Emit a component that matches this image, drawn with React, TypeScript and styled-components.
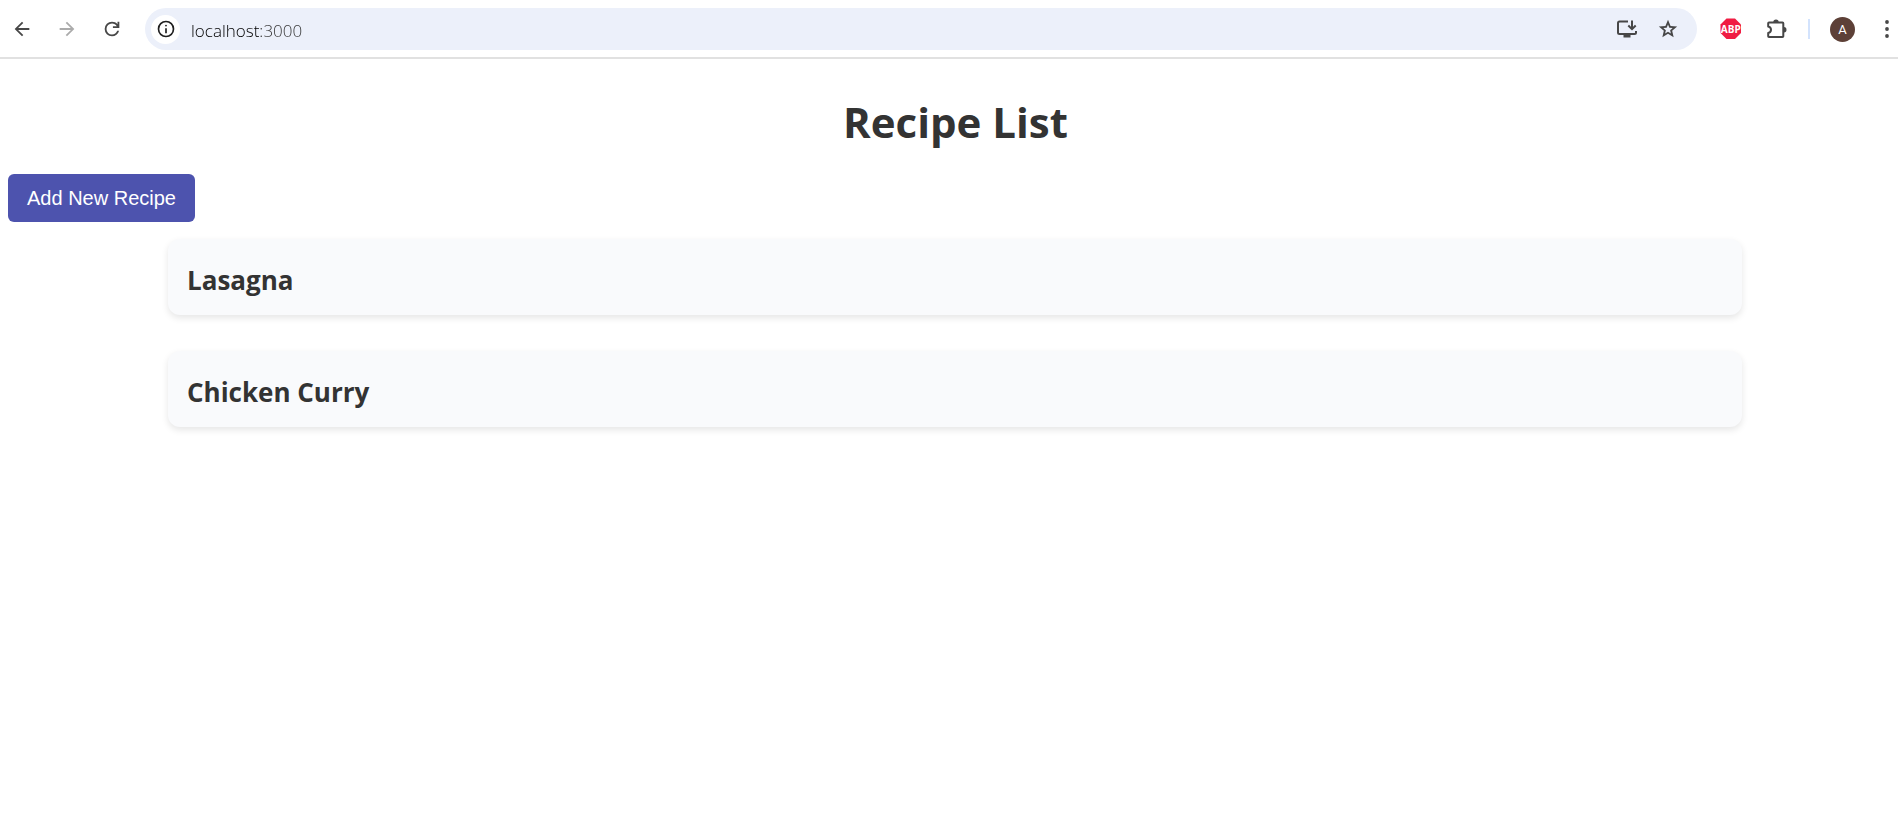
import React, { useState } from "react";
import styled, { createGlobalStyle } from "styled-components";

const GlobalStyle = createGlobalStyle`
  *, *::before, *::after { box-sizing: border-box; }
  body {
    margin: 0;
    background: #fff;
    color: #333;
    font-family: "Segoe UI", "Open Sans", "Noto Sans", sans-serif;
  }
`;

const Toolbar = styled.header`
  display: flex;
  align-items: center;
  height: 59px;
  padding: 8px 7px 7px;
  border-bottom: 2px solid #e1e1e1;
`;

const NavGroup = styled.nav`
  display: flex;
  gap: 16px;
  margin-right: 19px;
`;

const IconButton = styled.button<{ $color?: string; $width?: number }>`
  display: flex;
  align-items: center;
  justify-content: center;
  width: ${(p) => p.$width ?? 29}px;
  height: 29px;
  padding: 0;
  border: 0;
  border-radius: 50%;
  background: none;
  color: ${(p) => p.$color ?? "#474747"};
  flex: none;
  cursor: pointer;

  svg { display: block; flex: none; }
`;

const AddressBar = styled.div`
  display: flex;
  align-items: center;
  flex: 1;
  min-width: 0;
  height: 42px;
  padding: 0 15px 0 6px;
  border-radius: 21px;
  background: #ecf0fa;
`;

const SiteInfo = styled(IconButton)`
  background: #fff;
  color: #1f1f1f;
`;

const AddressInput = styled.input`
  flex: 1;
  min-width: 0;
  height: 32px;
  margin: 0 11px;
  padding: 2px 0 0;
  border: 0;
  outline: 0;
  background: linear-gradient(90deg, #000 70px, #333 70px);
  background-clip: text;
  color: transparent;
  caret-color: #1f1f1f;
  font: 300 17px/30px "Segoe UI", "Open Sans", "Noto Sans", sans-serif;
`;

const AddressActions = styled.div`
  display: flex;
  gap: 12px;
`;

const Extensions = styled.div`
  display: flex;
  gap: 17px;
  margin-left: 19px;
`;

const Divider = styled.span`
  width: 2px;
  height: 20px;
  margin: 0 20px 0 17px;
  background: #d3e3fd;
`;

const Avatar = styled.button`
  width: 25px;
  height: 25px;
  margin-right: 28px;
  padding: 0;
  border: 0;
  border-radius: 50%;
  background: #5d4037;
  color: #fff;
  font: 400 13px/25px Roboto, sans-serif;
  text-align: center;
  flex: none;
`;

const Page = styled.main`
  padding: 31px 0 32px 8px;
`;

const Title = styled.h1`
  margin: 0 0 21px;
  padding-left: 5px;
  font-size: 42px;
  line-height: 63px;
  font-weight: 700;
  text-align: center;
`;

const AddButton = styled.button`
  display: block;
  height: 48px;
  padding: 0 19px;
  border: 0;
  border-radius: 6px;
  background: #4d53ae;
  color: #fff;
  font: 400 20px/24px "Liberation Sans", Arial, sans-serif;
  cursor: pointer;
`;

const RecipeList = styled.ul`
  display: flex;
  flex-direction: column;
  gap: 36px;
  margin: 17px 156px 0 160px;
  padding: 0;
  list-style: none;

  @media (max-width: 800px) {
    margin-left: 16px;
    margin-right: 16px;
  }
`;

const RecipeCard = styled.li`
  padding: 22px 19px 16px;
  border-radius: 12px;
  background: #f9fafc;
  box-shadow: 0 3px 7px rgba(0, 0, 0, 0.1);
`;

const RecipeName = styled.h2`
  margin: 0;
  font-size: 26px;
  line-height: 38px;
  font-weight: 700;
`;

const recipes = ["Lasagna", "Chicken Curry"];

const Icon = ({ d, size = 22 }: { d: string; size?: number }) => (
  <svg width={size} height={size} viewBox="0 0 24 24" fill="currentColor" aria-hidden="true">
    <path d={d} />
  </svg>
);

const BACK = "M7.8 13l5.6 5.6L12 20l-8-8 8-8 1.4 1.4L7.8 11H20v2z";
const FORWARD = "M16.2 13H4v-2h12.2l-5.6-5.6L12 4l8 8-8 8-1.4-1.4z";
const RELOAD =
  "M12 20q-3.35 0-5.675-2.325T4 12q0-3.35 2.325-5.675T12 4q1.725 0 3.3.713T18 6.75V4h2v7h-7V9h4.2q-.8-1.4-2.187-2.2T12 6Q9.5 6 7.75 7.75T6 12q0 2.5 1.75 4.25T12 18q1.925 0 3.475-1.1T17.65 14h2.1q-.7 2.65-2.85 4.325T12 20z";
const INFO =
  "M11 17h2v-6h-2zm1-8a1 1 0 100-2.2 1 1 0 000 2.2zm0 13a10 10 0 110-20 10 10 0 010 20zm0-2a8 8 0 100-16 8 8 0 000 16z";
const STAR =
  "M8.85 16.83L12 14.93l3.15 1.92-.83-3.6 2.78-2.4-3.65-.32L12 7.13l-1.45 3.37-3.65.33 2.78 2.42zM5.83 21l1.62-7.03L2 9.25l7.2-.63L12 2l2.8 6.63 7.2.62-5.45 4.72L18.18 21 12 17.27z";

const InstallIcon = () => (
  <svg width="22" height="20" viewBox="0 0 22 20" fill="none" stroke="currentColor" strokeWidth="2" aria-hidden="true">
    <path d="M12 2.500H3.500Q2 2.500 2 4v9.500Q2 15 3.500 15h15q1.500 0 1.500-1.500V12" />
    <path d="M16 1.500v8.500M12.300 6.500l3.700 3.700L19.700 6.500" />
    <path d="M7.500 15h7v3.500h-7z" fill="currentColor" stroke="none" />
  </svg>
);

const AbpIcon = () => (
  <svg width="22" height="22" viewBox="0 0 22 22" aria-hidden="true">
    <path d="M6.500 .5h8.500l6 6v8.500l-6 6h-8.500l-6-6v-8.500z" fill="#f01c43" />
    <text x="10.800" y="14.500" textAnchor="middle" fontFamily="Open Sans, sans-serif" fontSize="10" fontWeight="700" fill="#fff">
      ABP
    </text>
  </svg>
);

const PuzzleIcon = () => (
  <svg width="22" height="22" viewBox="0 0 22 22" fill="none" aria-hidden="true">
    <path
      d="M3 4.500h13.500q.8 0 .8.8v13q0 .8-.8.8H3q-.8 0-.8-.8v-3.200q2.800-.6 2.800-3.300t-2.800-3.300V5.300q0-.8.8-.8z"
      stroke="currentColor"
      strokeWidth="2"
      strokeLinejoin="round"
    />
    <path d="M7.300 4a2.700 2.500 0 015.400 0zM18 9a2.500 2.700 0 010 5.400z" fill="currentColor" />
  </svg>
);

const MenuIcon = () => (
  <svg width="4" height="18" viewBox="0 0 4 18" fill="currentColor" aria-hidden="true">
    <circle cx="2" cy="2" r="1.900" />
    <circle cx="2" cy="9" r="1.900" />
    <circle cx="2" cy="16" r="1.900" />
  </svg>
);

export default function App() {
  const [address, setAddress] = useState("localhost:3000");

  return (
    <>
      <GlobalStyle />
      <Toolbar>
        <NavGroup aria-label="History">
          <IconButton aria-label="Back"><Icon d={BACK} /></IconButton>
          <IconButton aria-label="Forward" $color="#ababab"><Icon d={FORWARD} /></IconButton>
          <IconButton aria-label="Reload"><Icon d={RELOAD} /></IconButton>
        </NavGroup>
        <AddressBar>
          <SiteInfo aria-label="Site information"><Icon d={INFO} size={20} /></SiteInfo>
          <AddressInput
            aria-label="Address"
            spellCheck={false}
            value={address}
            onChange={(e) => setAddress(e.target.value)}
          />
          <AddressActions>
            <IconButton aria-label="Install app"><InstallIcon /></IconButton>
            <IconButton aria-label="Bookmark"><Icon d={STAR} /></IconButton>
          </AddressActions>
        </AddressBar>
        <Extensions>
          <IconButton aria-label="Ad blocker"><AbpIcon /></IconButton>
          <IconButton aria-label="Extensions"><PuzzleIcon /></IconButton>
        </Extensions>
        <Divider />
        <Avatar aria-label="Profile">A</Avatar>
        <IconButton aria-label="Menu" $width={8}><MenuIcon /></IconButton>
      </Toolbar>
      <Page>
        <Title>Recipe List</Title>
        <AddButton>Add New Recipe</AddButton>
        <RecipeList>
          {recipes.map((name) => (
            <RecipeCard key={name}>
              <RecipeName>{name}</RecipeName>
            </RecipeCard>
          ))}
        </RecipeList>
      </Page>
    </>
  );
}
